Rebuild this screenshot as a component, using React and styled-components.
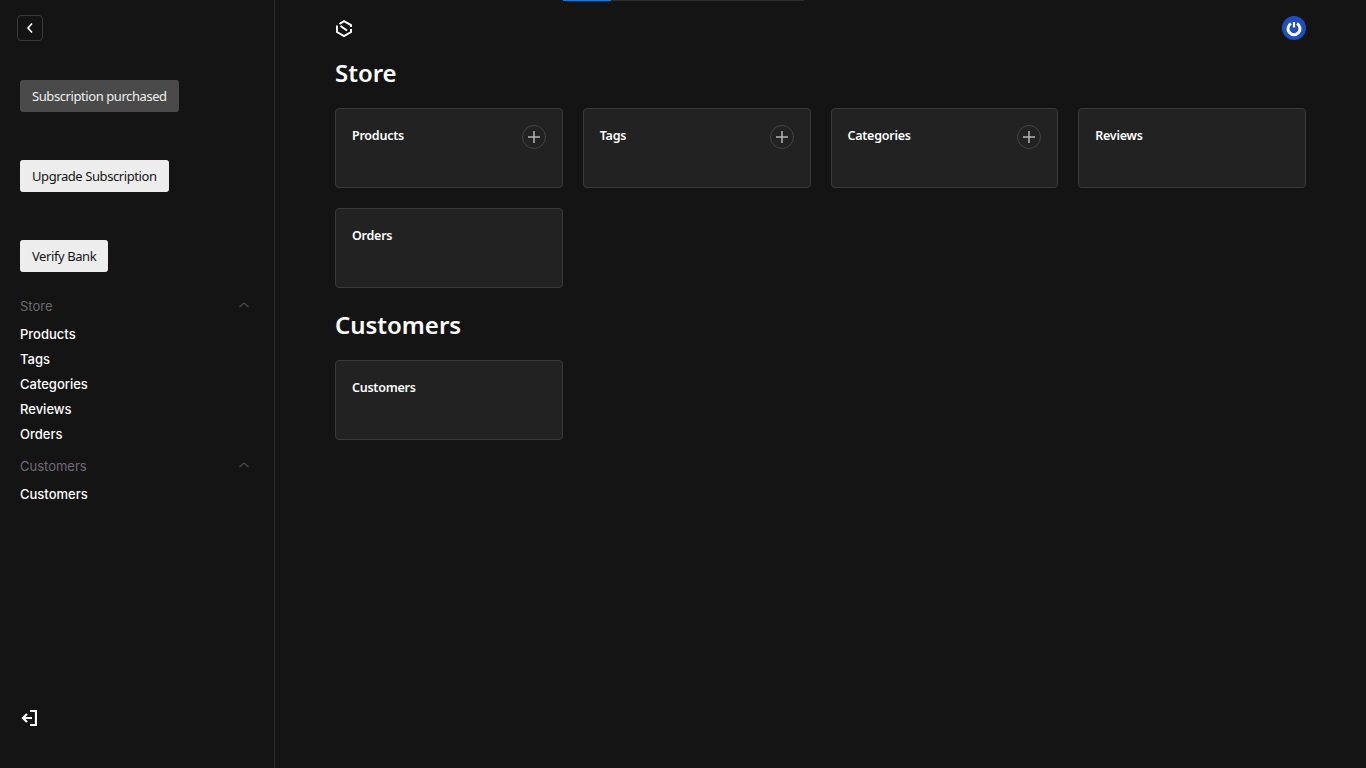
import React from "react";
import styled, { createGlobalStyle } from "styled-components";

const Global = createGlobalStyle`
  html, body { margin: 0; padding: 0; height: 100%; background: #141414; }
  * { box-sizing: border-box; }
  body { font-family: "Noto Sans", "Open Sans", sans-serif; color: #fff; }
`;

const Page = styled.div`
  display: flex;
  height: 768px;
  overflow: hidden;
  background: #141414;
`;

const Sidebar = styled.aside`
  width: 275px;
  flex: none;
  height: 100%;
  border-right: 1px solid #2e2e2e;
  display: flex;
  flex-direction: column;
  padding: 15px 25px 0 20px;
`;

const BackButton = styled.button`
  width: 26px;
  height: 26px;
  margin-left: -3px;
  padding: 0;
  display: flex;
  align-items: center;
  justify-content: center;
  background: transparent;
  color: #fff;
  border: 1px solid #3a3a3a;
  border-radius: 4px;
`;

const ActionButton = styled.button`
  align-self: flex-start;
  height: 32px;
  margin-top: ${(p) => p.$top}px;
  padding: 0 12px;
  border: 0;
  border-radius: 3px;
  font-family: "Noto Sans", sans-serif;
  font-size: 13px;
  letter-spacing: -0.42px;
  line-height: 32px;
  white-space: nowrap;
  background: ${(p) => (p.$muted ? "#4a4a4a" : "#ededed")};
  color: ${(p) => (p.$muted ? "#f0f0f0" : "#151515")};
`;

const NavGroup = styled.div`
  display: flex;
  flex-direction: column;
  margin-top: ${(p) => p.$top}px;
`;

const NavHead = styled.div`
  display: flex;
  align-items: center;
  justify-content: space-between;
  height: 20px;
  margin-bottom: 6px;
  font-family: Inter, sans-serif;
  font-size: 13px;
  color: ${(p) => p.$tone};
  svg { margin: -3px -1px 0 0; }
`;

const NavItem = styled.div`
  height: 25px;
  line-height: 25px;
  font-family: Inter, sans-serif;
  font-size: 13px;
  font-weight: 500;
  color: #fff;
`;

const Logout = styled.div`
  margin-top: auto;
  margin-bottom: 41px;
  margin-left: 1px;
  height: 18px;
  display: flex;
  align-items: center;
`;

const Main = styled.main`
  flex: 1;
  min-width: 0;
  position: relative;
  padding: 0 60px;
`;

const Progress = styled.div`
  position: absolute;
  top: 0;
  left: 288px;
  width: 241px;
  height: 1px;
  background: #2c2c2c;
`;

const ProgressFill = styled.div`
  height: 100%;
  background: #0f7fd8;
`;

const TopBar = styled.header`
  height: 56px;
  display: flex;
  align-items: center;
  justify-content: space-between;
`;

const Heading = styled.h2`
  margin: 0 0 18px;
  height: 34px;
  line-height: 34px;
  font-family: "Noto Sans", sans-serif;
  font-size: 24px;
  font-weight: 600;
  letter-spacing: -0.03px;
  color: #fff;
`;

const Grid = styled.div`
  display: grid;
  grid-template-columns: repeat(4, 1fr);
  gap: 20px;
  margin-bottom: 20px;
`;

const Card = styled.div`
  height: 80px;
  padding: 16px;
  display: flex;
  align-items: flex-start;
  justify-content: space-between;
  background: #222222;
  border: 1px solid #3a3a3a;
  border-radius: 4px;
`;

const CardTitle = styled.span`
  font-family: "Noto Sans", sans-serif;
  font-size: 12.5px;
  font-weight: 600;
  letter-spacing: -0.25px;
  line-height: 20px;
  padding-top: 1px;
  color: #fff;
`;

const AddButton = styled.span`
  width: 24px;
  height: 24px;
  flex: none;
  display: flex;
  align-items: center;
  justify-content: center;
  border: 1px solid #444444;
  border-radius: 50%;
`;

const Chevron = () => (
  <svg width="12" height="12" viewBox="0 0 12 12" fill="none" stroke="#4d4d4d" strokeWidth="1.2">
    <path d="M1.5 8 L6 4 L10.5 8" />
  </svg>
);

const Plus = () => (
  <svg width="14" height="14" viewBox="0 0 14 14" stroke="#b5b5b5" strokeWidth="1.5">
    <path d="M1 7H13M7 1V13" />
  </svg>
);

const Logo = () => (
  <svg width="18" height="19" viewBox="0 0 18 19" fill="none" stroke="#fff" strokeWidth="2">
    <path d="M2 6.5V13L9 17L16 13V10" />
    <path d="M4.5 5L9 2.2L16 6.2V8" />
    <path d="M5.5 7L12 11.5" />
  </svg>
);

const Power = () => (
  <svg width="24" height="24" viewBox="0 0 24 24" fill="none">
    <circle cx="12" cy="12" r="12" fill="#1d4fc0" />
    <path d="M9 7.5A6 6 0 1 0 15 7.5" stroke="#fff" strokeWidth="3" />
    <path d="M12 6V11.5" stroke="#fff" strokeWidth="2.2" />
  </svg>
);

const LogoutIcon = () => (
  <svg width="16" height="18" viewBox="0 0 16 18" fill="none" stroke="#fff" strokeWidth="2.2">
    <path d="M9 2H15V16H9" />
    <path d="M11 9H2M6 5L2 9L6 13" />
  </svg>
);

const BackIcon = () => (
  <svg width="10" height="12" viewBox="0 0 10 12" fill="none" stroke="#fff" strokeWidth="1.6">
    <path d="M7 1.5L3 6L7 10.5" />
  </svg>
);

const store = [
  { name: "Products", add: true },
  { name: "Tags", add: true },
  { name: "Categories", add: true },
  { name: "Reviews" },
  { name: "Orders" },
];

const Tile = ({ name, add }) => (
  <Card>
    <CardTitle>{name}</CardTitle>
    {add && (
      <AddButton>
        <Plus />
      </AddButton>
    )}
  </Card>
);

export default function App() {
  return (
    <Page>
      <Global />
      <Sidebar>
        <BackButton aria-label="Back">
          <BackIcon />
        </BackButton>
        <ActionButton $muted $top={39}>Subscription purchased</ActionButton>
        <ActionButton $top={48}>Upgrade Subscription</ActionButton>
        <ActionButton $top={48}>Verify Bank</ActionButton>
        <NavGroup $top={24}>
          <NavHead $tone="#6e6b6d">Store<Chevron /></NavHead>
          {store.map((s) => (
            <NavItem key={s.name}>{s.name}</NavItem>
          ))}
        </NavGroup>
        <NavGroup $top={9}>
          <NavHead $tone="#75687a">Customers<Chevron /></NavHead>
          <NavItem>Customers</NavItem>
        </NavGroup>
        <Logout>
          <LogoutIcon />
        </Logout>
      </Sidebar>
      <Main>
        <Progress>
          <ProgressFill style={{ width: "20%" }} />
        </Progress>
        <TopBar>
          <Logo />
          <Power />
        </TopBar>
        <Heading>Store</Heading>
        <Grid>
          {store.map((s) => (
            <Tile key={s.name} {...s} />
          ))}
        </Grid>
        <Heading>Customers</Heading>
        <Grid>
          <Tile name="Customers" />
        </Grid>
      </Main>
    </Page>
  );
}
